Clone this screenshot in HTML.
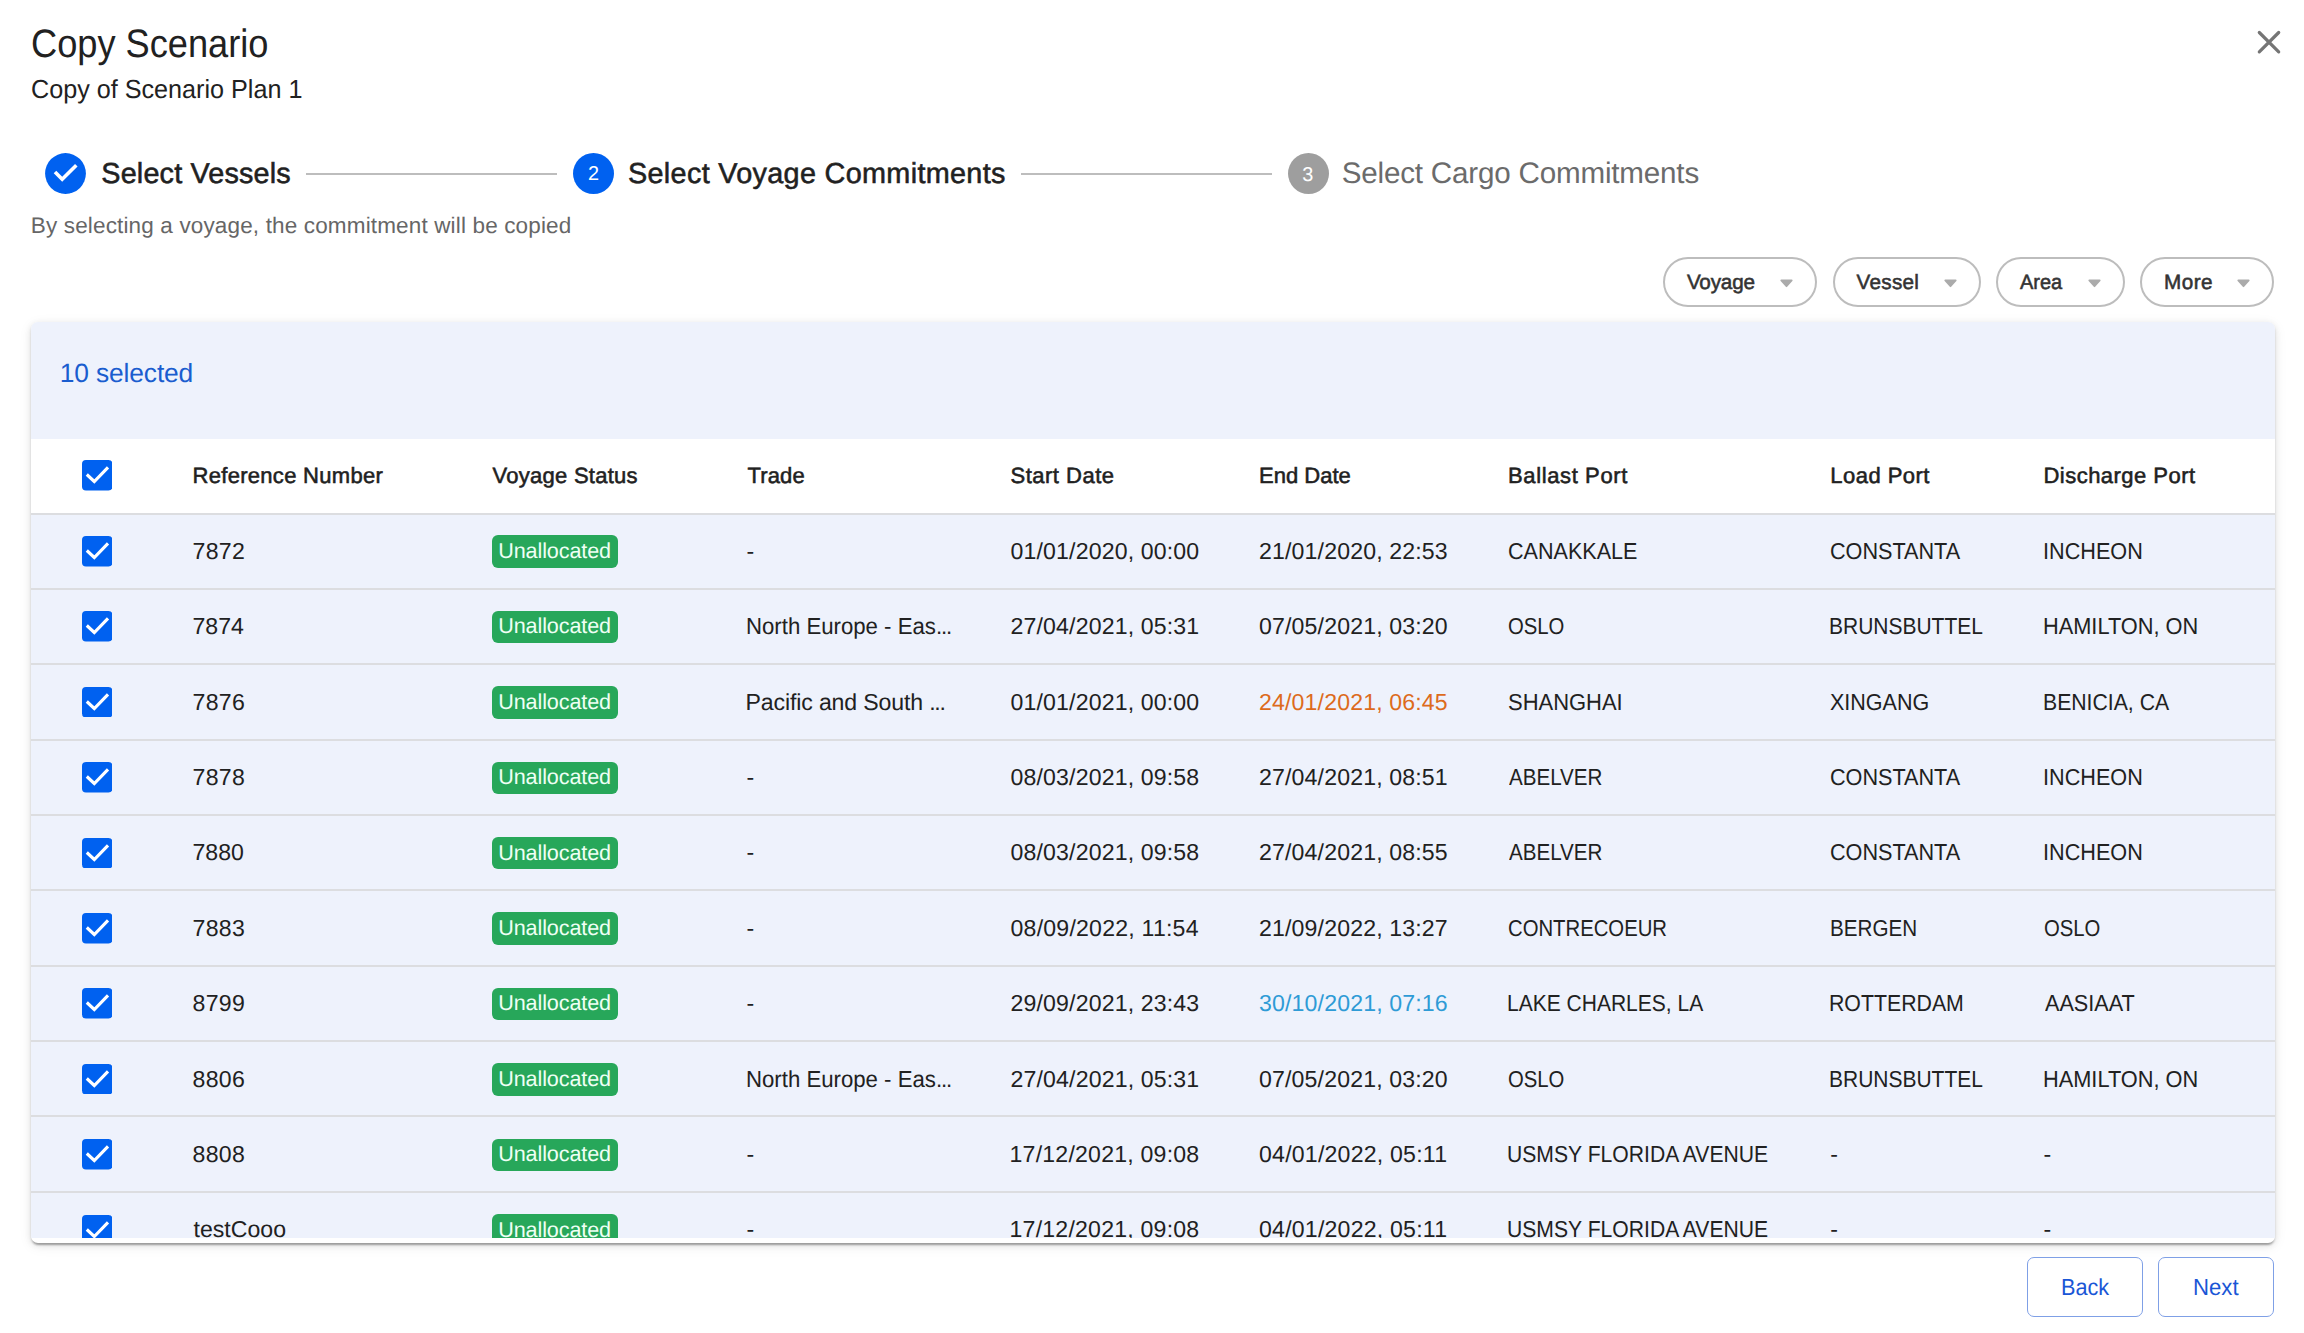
<!DOCTYPE html>
<html><head><meta charset="utf-8"><style>
html,body{margin:0;padding:0;background:#fff;width:2304px;height:1333px;overflow:hidden}
body{position:relative;font-family:"Liberation Sans",sans-serif}
.t{position:absolute;line-height:1;white-space:pre;text-rendering:geometricPrecision}
</style></head><body>
<div class="t" style="left:30.97px;top:25.00px;font-size:39.6px;color:#212121;transform:scaleX(0.9148);transform-origin:0 0;">Copy Scenario</div>
<div class="t" style="left:30.94px;top:76.00px;font-size:26.1px;color:#212121;transform:scaleX(0.9645);transform-origin:0 0;">Copy of Scenario Plan 1</div>
<svg style="position:absolute;left:2250px;top:23px" width="38" height="38" viewBox="0 0 38 38"><path d="M9.3 9.5 L28.7 28.9 M28.7 9.5 L9.3 28.9" stroke="#757575" stroke-width="3.2" stroke-linecap="round"/></svg>
<svg style="position:absolute;left:45.3px;top:153px" width="41" height="41" viewBox="0 0 41 41"><circle cx="20.5" cy="20.5" r="20.4" fill="#0061F0"/><path d="M10 19.1 L17.2 26.3 L31.3 12.2" stroke="#fff" stroke-width="3.6" fill="none"/></svg>
<div class="t" style="left:101.30px;top:160.00px;font-size:28.8px;color:#212121;letter-spacing:0.162px;-webkit-text-stroke:0.55px currentColor;">Select Vessels</div>
<div style="position:absolute;left:306.00px;top:173.00px;width:251.00px;height:2.00px;background:#bdbdbd"></div>
<svg style="position:absolute;left:572.5px;top:153px" width="41" height="41" viewBox="0 0 41 41"><circle cx="20.5" cy="20.5" r="20.5" fill="#0061F0"/></svg>
<div class="t" style="left:587.90px;top:165.00px;font-size:19.9px;color:#fff;">2</div>
<div class="t" style="left:628.00px;top:160.00px;font-size:28.8px;color:#212121;letter-spacing:0.321px;-webkit-text-stroke:0.55px currentColor;">Select Voyage Commitments</div>
<div style="position:absolute;left:1021.00px;top:173.00px;width:251.00px;height:2.00px;background:#bdbdbd"></div>
<svg style="position:absolute;left:1287.6px;top:153px" width="41" height="41" viewBox="0 0 41 41"><circle cx="20.5" cy="20.5" r="20.5" fill="#9e9e9e"/></svg>
<div class="t" style="left:1302.30px;top:166.00px;font-size:19.9px;color:#fff;">3</div>
<div class="t" style="left:1341.70px;top:159.00px;font-size:29.6px;color:#6b6b6b;letter-spacing:-0.187px;">Select Cargo Commitments</div>
<div class="t" style="left:30.80px;top:215.00px;font-size:22.5px;color:#666666;letter-spacing:0.151px;">By selecting a voyage, the commitment will be copied</div>
<div style="position:absolute;left:1662.5px;top:257px;width:150.7px;height:46px;border:2px solid #bdbdbd;border-radius:25px;"></div>
<div class="t" style="left:1686.90px;top:273.00px;font-size:20.7px;color:#333333;letter-spacing:-0.18px;-webkit-text-stroke:0.55px currentColor;">Voyage</div>
<svg style="position:absolute;left:1780.2px;top:278.5px" width="13" height="9" viewBox="0 0 13 9"><path d="M1.3 1.4 L11.7 1.4 L6.5 7.2 Z" fill="#ababab" stroke="#ababab" stroke-width="1.8" stroke-linejoin="round"/></svg>
<div style="position:absolute;left:1832.8px;top:257px;width:144.2px;height:46px;border:2px solid #bdbdbd;border-radius:25px;"></div>
<div class="t" style="left:1856.60px;top:273.00px;font-size:20.7px;color:#333333;letter-spacing:0.26px;-webkit-text-stroke:0.55px currentColor;">Vessel</div>
<svg style="position:absolute;left:1944.0px;top:278.5px" width="13" height="9" viewBox="0 0 13 9"><path d="M1.3 1.4 L11.7 1.4 L6.5 7.2 Z" fill="#ababab" stroke="#ababab" stroke-width="1.8" stroke-linejoin="round"/></svg>
<div style="position:absolute;left:1996.4px;top:257px;width:124.6px;height:46px;border:2px solid #bdbdbd;border-radius:25px;"></div>
<div class="t" style="left:2020.30px;top:273.00px;font-size:20.7px;color:#333333;transform:scaleX(0.9659);transform-origin:0 0;-webkit-text-stroke:0.55px currentColor;">Area</div>
<svg style="position:absolute;left:2088.0px;top:278.5px" width="13" height="9" viewBox="0 0 13 9"><path d="M1.3 1.4 L11.7 1.4 L6.5 7.2 Z" fill="#ababab" stroke="#ababab" stroke-width="1.8" stroke-linejoin="round"/></svg>
<div style="position:absolute;left:2140.4px;top:257px;width:129.9px;height:46px;border:2px solid #bdbdbd;border-radius:25px;"></div>
<div class="t" style="left:2164.00px;top:273.00px;font-size:20.7px;color:#333333;letter-spacing:0.467px;-webkit-text-stroke:0.55px currentColor;">More</div>
<svg style="position:absolute;left:2237.3px;top:278.5px" width="13" height="9" viewBox="0 0 13 9"><path d="M1.3 1.4 L11.7 1.4 L6.5 7.2 Z" fill="#ababab" stroke="#ababab" stroke-width="1.8" stroke-linejoin="round"/></svg>
<div style="position:absolute;left:31px;top:322px;width:2244.00px;height:921.00px;border-radius:7px;background:#fff;box-shadow:0 4px 2px -2px rgba(0,0,0,0.2),0 2px 2px 0 rgba(0,0,0,0.14),0 2px 6px 0 rgba(0,0,0,0.10),0 3px 14px 0 rgba(0,0,0,0.07);overflow:hidden">
<div style="position:absolute;left:0;top:0;right:0;height:915.80px;overflow:hidden;background:#EEF2FC">
<div class="t" style="left:28.80px;top:38.00px;font-size:26.4px;color:#1a5dcf;letter-spacing:-0.15px;">10 selected</div>
<div style="position:absolute;left:0.00px;top:116.90px;width:2244.00px;height:74.20px;background:#fff"></div>
<div style="position:absolute;left:50.80px;top:138.30px;width:30.5px;height:30.5px"><svg width="30.5" height="30.5" viewBox="0 0 30.5 30.5" style="display:block"><rect x="0" y="0" width="30.5" height="30.5" rx="4" fill="#0061F0"/><path d="M4.8 14.5 L12.3 21.5 L26 7.4" stroke="#fff" stroke-width="3.1" fill="none"/></svg></div>
<div class="t" style="left:161.50px;top:143.00px;font-size:22.0px;color:#212121;letter-spacing:0.3px;-webkit-text-stroke:0.55px currentColor;">Reference Number</div>
<div class="t" style="left:461.50px;top:143.00px;font-size:22.0px;color:#212121;letter-spacing:0.267px;-webkit-text-stroke:0.55px currentColor;">Voyage Status</div>
<div class="t" style="left:716.60px;top:143.00px;font-size:22.0px;color:#212121;letter-spacing:0.1px;-webkit-text-stroke:0.55px currentColor;">Trade</div>
<div class="t" style="left:979.50px;top:143.00px;font-size:22.0px;color:#212121;letter-spacing:0.5px;-webkit-text-stroke:0.55px currentColor;">Start Date</div>
<div class="t" style="left:1228.00px;top:143.00px;font-size:22.0px;color:#212121;-webkit-text-stroke:0.55px currentColor;">End Date</div>
<div class="t" style="left:1477.00px;top:143.00px;font-size:22.0px;color:#212121;letter-spacing:0.618px;-webkit-text-stroke:0.55px currentColor;">Ballast Port</div>
<div class="t" style="left:1799.30px;top:143.00px;font-size:22.0px;color:#212121;letter-spacing:0.463px;-webkit-text-stroke:0.55px currentColor;">Load Port</div>
<div class="t" style="left:2012.50px;top:143.00px;font-size:22.0px;color:#212121;letter-spacing:0.469px;-webkit-text-stroke:0.55px currentColor;">Discharge Port</div>
<div style="position:absolute;left:0.00px;top:190.60px;width:2244.00px;height:2.00px;background:#dcdde0"></div>
<div style="position:absolute;left:50.80px;top:214.00px;width:30.5px;height:30.5px"><svg width="30.5" height="30.5" viewBox="0 0 30.5 30.5" style="display:block"><rect x="0" y="0" width="30.5" height="30.5" rx="4" fill="#0061F0"/><path d="M4.8 14.5 L12.3 21.5 L26 7.4" stroke="#fff" stroke-width="3.1" fill="none"/></svg></div>
<div class="t" style="left:161.50px;top:218.00px;font-size:23.1px;color:#212121;letter-spacing:0.333px;">7872</div>
<div style="position:absolute;left:460.70px;top:213.30px;width:126.30px;height:32.50px;background:#27A75A;border-radius:6px"></div>
<div class="t" style="left:467.20px;top:218.00px;font-size:21.6px;color:#eefff4;letter-spacing:-0.11px;">Unallocated</div>
<div class="t" style="left:715.60px;top:218.00px;font-size:23.1px;color:#212121;">-</div>
<div class="t" style="left:979.50px;top:218.00px;font-size:23.1px;color:#212121;letter-spacing:0.156px;">01/01/2020, 00:00</div>
<div class="t" style="left:1228.00px;top:218.00px;font-size:23.1px;color:#212121;letter-spacing:0.156px;">21/01/2020, 22:53</div>
<div class="t" style="left:1477.07px;top:218.00px;font-size:23.1px;color:#212121;transform:scaleX(0.9336);transform-origin:0 0;">CANAKKALE</div>
<div class="t" style="left:1799.36px;top:218.00px;font-size:23.1px;color:#212121;transform:scaleX(0.9362);transform-origin:0 0;">CONSTANTA</div>
<div class="t" style="left:2011.63px;top:218.00px;font-size:23.1px;color:#212121;transform:scaleX(0.9369);transform-origin:0 0;">INCHEON</div>
<div style="position:absolute;left:0.00px;top:265.96px;width:2244.00px;height:2.00px;background:#dcdde0"></div>
<div style="position:absolute;left:50.80px;top:289.40px;width:30.5px;height:30.5px"><svg width="30.5" height="30.5" viewBox="0 0 30.5 30.5" style="display:block"><rect x="0" y="0" width="30.5" height="30.5" rx="4" fill="#0061F0"/><path d="M4.8 14.5 L12.3 21.5 L26 7.4" stroke="#fff" stroke-width="3.1" fill="none"/></svg></div>
<div class="t" style="left:161.50px;top:293.00px;font-size:23.1px;color:#212121;">7874</div>
<div style="position:absolute;left:460.70px;top:288.70px;width:126.30px;height:32.50px;background:#27A75A;border-radius:6px"></div>
<div class="t" style="left:467.20px;top:293.00px;font-size:21.6px;color:#eefff4;letter-spacing:-0.11px;">Unallocated</div>
<div class="t" style="left:714.68px;top:293.00px;font-size:23.1px;color:#212121;transform:scaleX(0.9605);transform-origin:0 0;">North Europe - Eas<span style='letter-spacing:-1.2px'>...</span></div>
<div class="t" style="left:979.50px;top:293.00px;font-size:23.1px;color:#212121;letter-spacing:0.156px;">27/04/2021, 05:31</div>
<div class="t" style="left:1228.00px;top:293.00px;font-size:23.1px;color:#212121;letter-spacing:0.156px;">07/05/2021, 03:20</div>
<div class="t" style="left:1477.12px;top:293.00px;font-size:23.1px;color:#212121;transform:scaleX(0.8790);transform-origin:0 0;">OSLO</div>
<div class="t" style="left:1798.48px;top:293.00px;font-size:23.1px;color:#212121;transform:scaleX(0.9084);transform-origin:0 0;">BRUNSBUTTEL</div>
<div class="t" style="left:2011.62px;top:293.00px;font-size:23.1px;color:#212121;transform:scaleX(0.9422);transform-origin:0 0;">HAMILTON, ON</div>
<div style="position:absolute;left:0.00px;top:341.32px;width:2244.00px;height:2.00px;background:#dcdde0"></div>
<div style="position:absolute;left:50.80px;top:364.80px;width:30.5px;height:30.5px"><svg width="30.5" height="30.5" viewBox="0 0 30.5 30.5" style="display:block"><rect x="0" y="0" width="30.5" height="30.5" rx="4" fill="#0061F0"/><path d="M4.8 14.5 L12.3 21.5 L26 7.4" stroke="#fff" stroke-width="3.1" fill="none"/></svg></div>
<div class="t" style="left:161.50px;top:369.00px;font-size:23.1px;color:#212121;letter-spacing:0.333px;">7876</div>
<div style="position:absolute;left:460.70px;top:364.10px;width:126.30px;height:32.50px;background:#27A75A;border-radius:6px"></div>
<div class="t" style="left:467.20px;top:369.00px;font-size:21.6px;color:#eefff4;letter-spacing:-0.11px;">Unallocated</div>
<div class="t" style="left:714.60px;top:369.00px;font-size:23.1px;color:#212121;letter-spacing:-0.144px;">Pacific and South <span style='letter-spacing:-1.2px'>...</span></div>
<div class="t" style="left:979.50px;top:369.00px;font-size:23.1px;color:#212121;letter-spacing:0.156px;">01/01/2021, 00:00</div>
<div class="t" style="left:1228.00px;top:369.00px;font-size:23.1px;color:#DD6B1C;letter-spacing:0.156px;">24/01/2021, 06:45</div>
<div class="t" style="left:1477.05px;top:369.00px;font-size:23.1px;color:#212121;transform:scaleX(0.9508);transform-origin:0 0;">SHANGHAI</div>
<div class="t" style="left:1799.37px;top:369.00px;font-size:23.1px;color:#212121;transform:scaleX(0.9317);transform-origin:0 0;">XINGANG</div>
<div class="t" style="left:2011.66px;top:369.00px;font-size:23.1px;color:#212121;transform:scaleX(0.9185);transform-origin:0 0;">BENICIA, CA</div>
<div style="position:absolute;left:0.00px;top:416.68px;width:2244.00px;height:2.00px;background:#dcdde0"></div>
<div style="position:absolute;left:50.80px;top:440.20px;width:30.5px;height:30.5px"><svg width="30.5" height="30.5" viewBox="0 0 30.5 30.5" style="display:block"><rect x="0" y="0" width="30.5" height="30.5" rx="4" fill="#0061F0"/><path d="M4.8 14.5 L12.3 21.5 L26 7.4" stroke="#fff" stroke-width="3.1" fill="none"/></svg></div>
<div class="t" style="left:161.50px;top:444.00px;font-size:23.1px;color:#212121;letter-spacing:0.333px;">7878</div>
<div style="position:absolute;left:460.70px;top:439.50px;width:126.30px;height:32.50px;background:#27A75A;border-radius:6px"></div>
<div class="t" style="left:467.20px;top:444.00px;font-size:21.6px;color:#eefff4;letter-spacing:-0.11px;">Unallocated</div>
<div class="t" style="left:715.60px;top:444.00px;font-size:23.1px;color:#212121;">-</div>
<div class="t" style="left:979.50px;top:444.00px;font-size:23.1px;color:#212121;letter-spacing:0.156px;">08/03/2021, 09:58</div>
<div class="t" style="left:1228.00px;top:444.00px;font-size:23.1px;color:#212121;letter-spacing:0.156px;">27/04/2021, 08:51</div>
<div class="t" style="left:1478.00px;top:444.00px;font-size:23.1px;color:#212121;transform:scaleX(0.8913);transform-origin:0 0;">ABELVER</div>
<div class="t" style="left:1799.36px;top:444.00px;font-size:23.1px;color:#212121;transform:scaleX(0.9362);transform-origin:0 0;">CONSTANTA</div>
<div class="t" style="left:2011.63px;top:444.00px;font-size:23.1px;color:#212121;transform:scaleX(0.9369);transform-origin:0 0;">INCHEON</div>
<div style="position:absolute;left:0.00px;top:492.04px;width:2244.00px;height:2.00px;background:#dcdde0"></div>
<div style="position:absolute;left:50.80px;top:515.60px;width:30.5px;height:30.5px"><svg width="30.5" height="30.5" viewBox="0 0 30.5 30.5" style="display:block"><rect x="0" y="0" width="30.5" height="30.5" rx="4" fill="#0061F0"/><path d="M4.8 14.5 L12.3 21.5 L26 7.4" stroke="#fff" stroke-width="3.1" fill="none"/></svg></div>
<div class="t" style="left:161.50px;top:519.00px;font-size:23.1px;color:#212121;">7880</div>
<div style="position:absolute;left:460.70px;top:514.90px;width:126.30px;height:32.50px;background:#27A75A;border-radius:6px"></div>
<div class="t" style="left:467.20px;top:520.00px;font-size:21.6px;color:#eefff4;letter-spacing:-0.11px;">Unallocated</div>
<div class="t" style="left:715.60px;top:519.00px;font-size:23.1px;color:#212121;">-</div>
<div class="t" style="left:979.50px;top:519.00px;font-size:23.1px;color:#212121;letter-spacing:0.156px;">08/03/2021, 09:58</div>
<div class="t" style="left:1228.00px;top:519.00px;font-size:23.1px;color:#212121;letter-spacing:0.156px;">27/04/2021, 08:55</div>
<div class="t" style="left:1478.00px;top:519.00px;font-size:23.1px;color:#212121;transform:scaleX(0.8913);transform-origin:0 0;">ABELVER</div>
<div class="t" style="left:1799.36px;top:519.00px;font-size:23.1px;color:#212121;transform:scaleX(0.9362);transform-origin:0 0;">CONSTANTA</div>
<div class="t" style="left:2011.63px;top:519.00px;font-size:23.1px;color:#212121;transform:scaleX(0.9369);transform-origin:0 0;">INCHEON</div>
<div style="position:absolute;left:0.00px;top:567.40px;width:2244.00px;height:2.00px;background:#dcdde0"></div>
<div style="position:absolute;left:50.80px;top:591.00px;width:30.5px;height:30.5px"><svg width="30.5" height="30.5" viewBox="0 0 30.5 30.5" style="display:block"><rect x="0" y="0" width="30.5" height="30.5" rx="4" fill="#0061F0"/><path d="M4.8 14.5 L12.3 21.5 L26 7.4" stroke="#fff" stroke-width="3.1" fill="none"/></svg></div>
<div class="t" style="left:161.50px;top:595.00px;font-size:23.1px;color:#212121;letter-spacing:0.333px;">7883</div>
<div style="position:absolute;left:460.70px;top:590.30px;width:126.30px;height:32.50px;background:#27A75A;border-radius:6px"></div>
<div class="t" style="left:467.20px;top:595.00px;font-size:21.6px;color:#eefff4;letter-spacing:-0.11px;">Unallocated</div>
<div class="t" style="left:715.60px;top:595.00px;font-size:23.1px;color:#212121;">-</div>
<div class="t" style="left:979.50px;top:595.00px;font-size:23.1px;color:#212121;letter-spacing:0.219px;">08/09/2022, 11:54</div>
<div class="t" style="left:1228.00px;top:595.00px;font-size:23.1px;color:#212121;letter-spacing:0.156px;">21/09/2022, 13:27</div>
<div class="t" style="left:1477.12px;top:595.00px;font-size:23.1px;color:#212121;transform:scaleX(0.8788);transform-origin:0 0;">CONTRECOEUR</div>
<div class="t" style="left:1798.51px;top:595.00px;font-size:23.1px;color:#212121;transform:scaleX(0.8936);transform-origin:0 0;">BERGEN</div>
<div class="t" style="left:2012.62px;top:595.00px;font-size:23.1px;color:#212121;transform:scaleX(0.8790);transform-origin:0 0;">OSLO</div>
<div style="position:absolute;left:0.00px;top:642.76px;width:2244.00px;height:2.00px;background:#dcdde0"></div>
<div style="position:absolute;left:50.80px;top:666.40px;width:30.5px;height:30.5px"><svg width="30.5" height="30.5" viewBox="0 0 30.5 30.5" style="display:block"><rect x="0" y="0" width="30.5" height="30.5" rx="4" fill="#0061F0"/><path d="M4.8 14.5 L12.3 21.5 L26 7.4" stroke="#fff" stroke-width="3.1" fill="none"/></svg></div>
<div class="t" style="left:161.50px;top:670.00px;font-size:23.1px;color:#212121;letter-spacing:0.333px;">8799</div>
<div style="position:absolute;left:460.70px;top:665.70px;width:126.30px;height:32.50px;background:#27A75A;border-radius:6px"></div>
<div class="t" style="left:467.20px;top:670.00px;font-size:21.6px;color:#eefff4;letter-spacing:-0.11px;">Unallocated</div>
<div class="t" style="left:715.60px;top:670.00px;font-size:23.1px;color:#212121;">-</div>
<div class="t" style="left:979.50px;top:670.00px;font-size:23.1px;color:#212121;letter-spacing:0.156px;">29/09/2021, 23:43</div>
<div class="t" style="left:1228.00px;top:670.00px;font-size:23.1px;color:#2E9BD6;letter-spacing:0.156px;">30/10/2021, 07:16</div>
<div class="t" style="left:1476.18px;top:670.00px;font-size:23.1px;color:#212121;transform:scaleX(0.9098);transform-origin:0 0;">LAKE CHARLES, LA</div>
<div class="t" style="left:1798.46px;top:670.00px;font-size:23.1px;color:#212121;transform:scaleX(0.9218);transform-origin:0 0;">ROTTERDAM</div>
<div class="t" style="left:2013.50px;top:670.00px;font-size:23.1px;color:#212121;transform:scaleX(0.9368);transform-origin:0 0;">AASIAAT</div>
<div style="position:absolute;left:0.00px;top:718.12px;width:2244.00px;height:2.00px;background:#dcdde0"></div>
<div style="position:absolute;left:50.80px;top:741.80px;width:30.5px;height:30.5px"><svg width="30.5" height="30.5" viewBox="0 0 30.5 30.5" style="display:block"><rect x="0" y="0" width="30.5" height="30.5" rx="4" fill="#0061F0"/><path d="M4.8 14.5 L12.3 21.5 L26 7.4" stroke="#fff" stroke-width="3.1" fill="none"/></svg></div>
<div class="t" style="left:161.50px;top:746.00px;font-size:23.1px;color:#212121;letter-spacing:0.333px;">8806</div>
<div style="position:absolute;left:460.70px;top:741.10px;width:126.30px;height:32.50px;background:#27A75A;border-radius:6px"></div>
<div class="t" style="left:467.20px;top:746.00px;font-size:21.6px;color:#eefff4;letter-spacing:-0.11px;">Unallocated</div>
<div class="t" style="left:714.68px;top:746.00px;font-size:23.1px;color:#212121;transform:scaleX(0.9605);transform-origin:0 0;">North Europe - Eas<span style='letter-spacing:-1.2px'>...</span></div>
<div class="t" style="left:979.50px;top:746.00px;font-size:23.1px;color:#212121;letter-spacing:0.156px;">27/04/2021, 05:31</div>
<div class="t" style="left:1228.00px;top:746.00px;font-size:23.1px;color:#212121;letter-spacing:0.156px;">07/05/2021, 03:20</div>
<div class="t" style="left:1477.12px;top:746.00px;font-size:23.1px;color:#212121;transform:scaleX(0.8790);transform-origin:0 0;">OSLO</div>
<div class="t" style="left:1798.48px;top:746.00px;font-size:23.1px;color:#212121;transform:scaleX(0.9084);transform-origin:0 0;">BRUNSBUTTEL</div>
<div class="t" style="left:2011.62px;top:746.00px;font-size:23.1px;color:#212121;transform:scaleX(0.9422);transform-origin:0 0;">HAMILTON, ON</div>
<div style="position:absolute;left:0.00px;top:793.48px;width:2244.00px;height:2.00px;background:#dcdde0"></div>
<div style="position:absolute;left:50.80px;top:817.20px;width:30.5px;height:30.5px"><svg width="30.5" height="30.5" viewBox="0 0 30.5 30.5" style="display:block"><rect x="0" y="0" width="30.5" height="30.5" rx="4" fill="#0061F0"/><path d="M4.8 14.5 L12.3 21.5 L26 7.4" stroke="#fff" stroke-width="3.1" fill="none"/></svg></div>
<div class="t" style="left:161.50px;top:821.00px;font-size:23.1px;color:#212121;letter-spacing:0.333px;">8808</div>
<div style="position:absolute;left:460.70px;top:816.50px;width:126.30px;height:32.50px;background:#27A75A;border-radius:6px"></div>
<div class="t" style="left:467.20px;top:821.00px;font-size:21.6px;color:#eefff4;letter-spacing:-0.11px;">Unallocated</div>
<div class="t" style="left:715.60px;top:821.00px;font-size:23.1px;color:#212121;">-</div>
<div class="t" style="left:978.50px;top:821.00px;font-size:23.1px;color:#212121;letter-spacing:0.219px;">17/12/2021, 09:08</div>
<div class="t" style="left:1228.00px;top:821.00px;font-size:23.1px;color:#212121;letter-spacing:0.219px;">04/01/2022, 05:11</div>
<div class="t" style="left:1476.17px;top:821.00px;font-size:23.1px;color:#212121;transform:scaleX(0.9152);transform-origin:0 0;">USMSY FLORIDA AVENUE</div>
<div class="t" style="left:1799.30px;top:821.00px;font-size:23.1px;color:#212121;">-</div>
<div class="t" style="left:2012.50px;top:821.00px;font-size:23.1px;color:#212121;">-</div>
<div style="position:absolute;left:0.00px;top:868.84px;width:2244.00px;height:2.00px;background:#dcdde0"></div>
<div style="position:absolute;left:50.80px;top:892.60px;width:30.5px;height:30.5px"><svg width="30.5" height="30.5" viewBox="0 0 30.5 30.5" style="display:block"><rect x="0" y="0" width="30.5" height="30.5" rx="4" fill="#0061F0"/><path d="M4.8 14.5 L12.3 21.5 L26 7.4" stroke="#fff" stroke-width="3.1" fill="none"/></svg></div>
<div class="t" style="left:162.50px;top:896.00px;font-size:23.1px;color:#212121;letter-spacing:0.014px;">testCooo</div>
<div style="position:absolute;left:460.70px;top:891.90px;width:126.30px;height:32.50px;background:#27A75A;border-radius:6px"></div>
<div class="t" style="left:467.20px;top:897.00px;font-size:21.6px;color:#eefff4;letter-spacing:-0.11px;">Unallocated</div>
<div class="t" style="left:715.60px;top:896.00px;font-size:23.1px;color:#212121;">-</div>
<div class="t" style="left:978.50px;top:896.00px;font-size:23.1px;color:#212121;letter-spacing:0.219px;">17/12/2021, 09:08</div>
<div class="t" style="left:1228.00px;top:896.00px;font-size:23.1px;color:#212121;letter-spacing:0.219px;">04/01/2022, 05:11</div>
<div class="t" style="left:1476.17px;top:896.00px;font-size:23.1px;color:#212121;transform:scaleX(0.9152);transform-origin:0 0;">USMSY FLORIDA AVENUE</div>
<div class="t" style="left:1799.30px;top:896.00px;font-size:23.1px;color:#212121;">-</div>
<div class="t" style="left:2012.50px;top:896.00px;font-size:23.1px;color:#212121;">-</div>
</div></div>
<div style="position:absolute;left:2026.8px;top:1257.3px;width:114.0px;height:57.6px;border:1.6px solid #7fa0e6;border-radius:7px"></div>
<div style="position:absolute;left:2158.2px;top:1257.3px;width:113.6px;height:57.6px;border:1.6px solid #7fa0e6;border-radius:7px"></div>
<div class="t" style="left:2060.94px;top:1276.00px;font-size:23.3px;color:#1a56d6;transform:scaleX(0.9300);transform-origin:0 0;">Back</div>
<div class="t" style="left:2193.10px;top:1276.00px;font-size:23.3px;color:#1a56d6;transform:scaleX(0.9522);transform-origin:0 0;">Next</div>
</body></html>
